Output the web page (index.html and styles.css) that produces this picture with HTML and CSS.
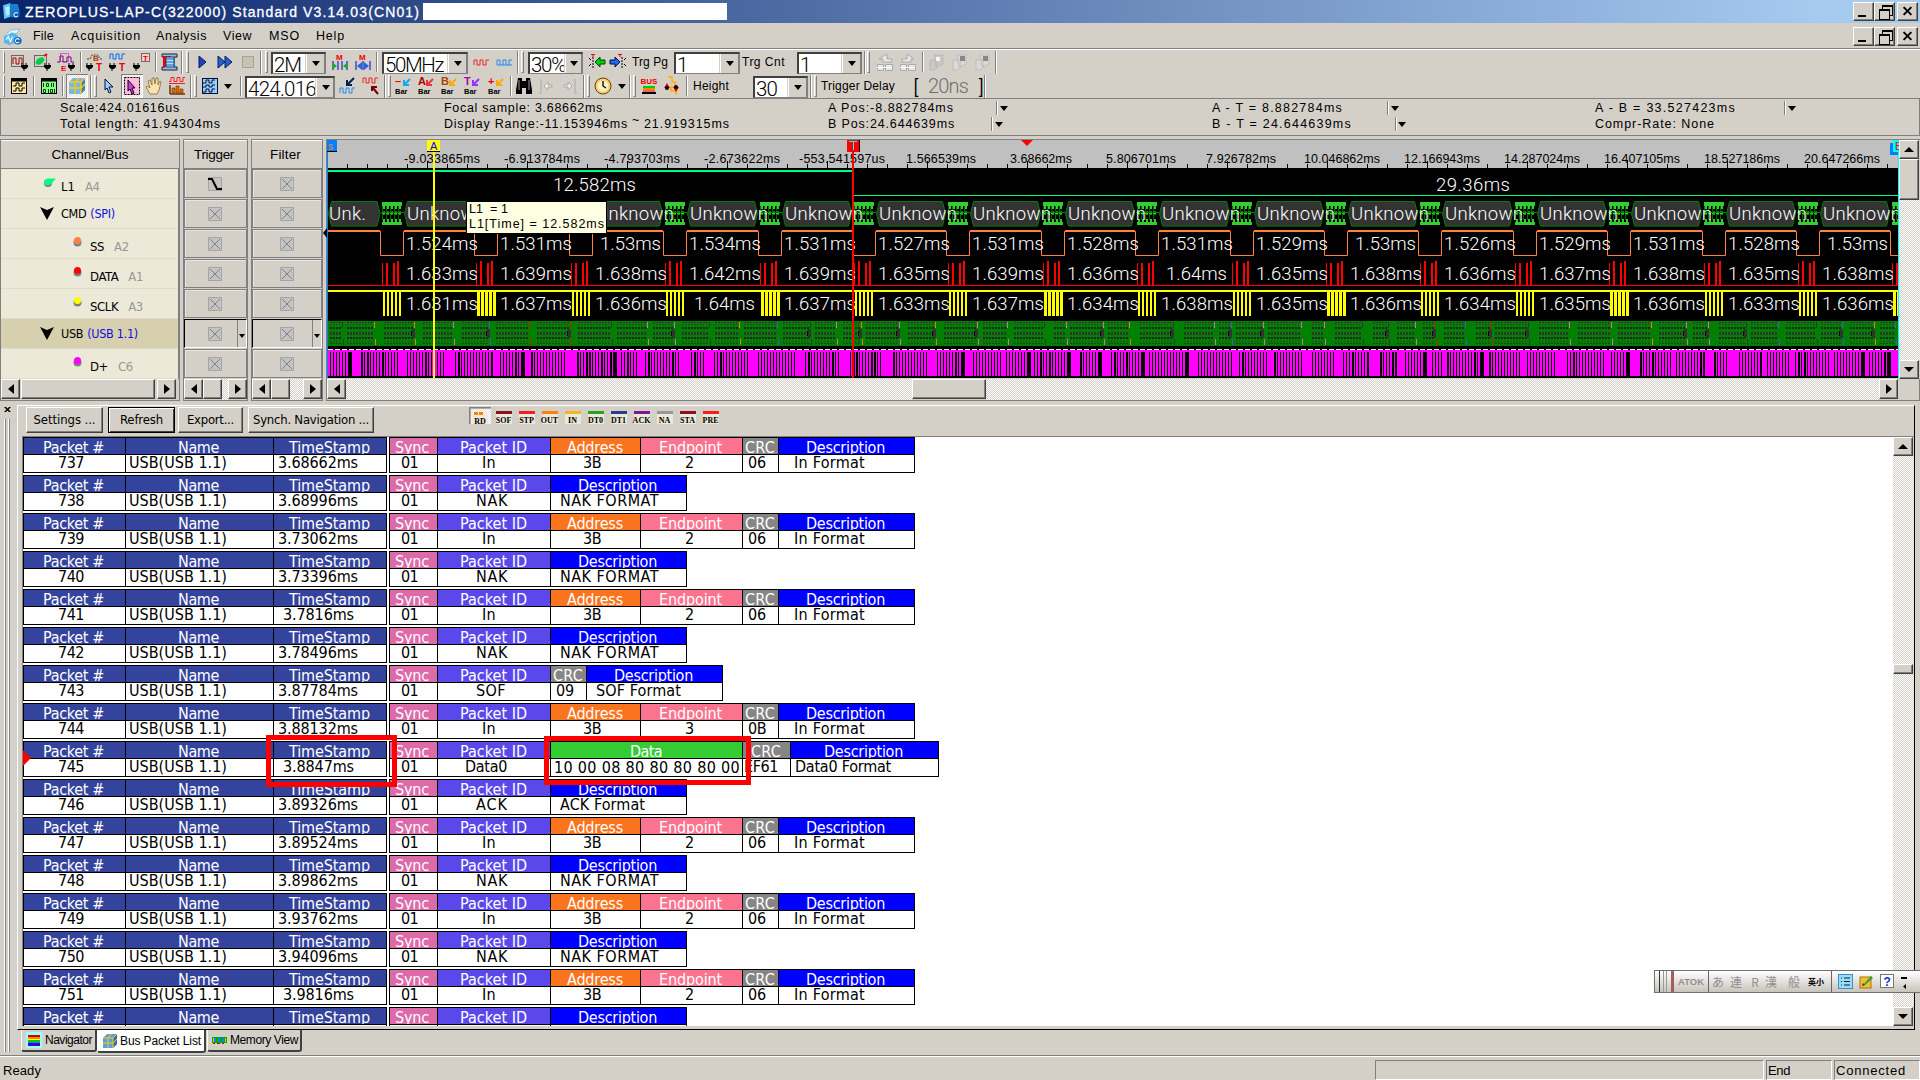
FILE: index.html
```html
<!DOCTYPE html>
<html lang="en">
<head>
<meta charset="utf-8">
<title>ZEROPLUS-LAP-C(322000) Standard V3.14.03(CN01)</title>
<link rel="stylesheet" href="styles.css">
</head>
<body>
<header class="title">
  <svg class="logo" viewBox="0 0 18 18"><path d="M1 3l7-2v13l-6 2z" fill="#5ac8f5"/><path d="M8 2h7l2 9-6 4-3-1z" fill="#1b7fd0"/><path d="M3 5l4-1v8l-3 1z" fill="#bfeaff"/><circle cx="13.5" cy="12" r="3.5" fill="#0a58b0"/><path d="M15 11a2 2 0 1 0 0 2" stroke="#fff" fill="none"/></svg>
  <span class="title-text" data-w="395">ZEROPLUS-LAP-C(322000) Standard V3.14.03(CN01)</span>
  <span class="blank"></span>
  <div class="winbtns"><b class="min"></b><b class="rest"></b><b class="cls"></b></div>
</header>
<nav class="menu">
  <svg class="logo" viewBox="0 0 18 18"><path d="M1 9l6-6 9-1-3 4z" fill="#e8f6ff" stroke="#58a8d8" stroke-width=".6"/><path d="M1 9l8-4 5 3v6l-8 3-5-2z" fill="#58b8ec"/><path d="M3 12l2-3 2 5 2-5" stroke="#fff" fill="none"/><circle cx="14" cy="13" r="3.6" fill="#0a68b8"/><path d="M15.500 12a2 2 0 1 0 0 2" stroke="#fff" fill="none"/></svg>
  <span class="m1" data-w="21">File</span><span class="m2" data-w="70">Acquisition</span><span class="m3" data-w="51">Analysis</span><span class="m4" data-w="29">View</span><span class="m5" data-w="31">MSO</span><span class="m6" data-w="29">Help</span>
  <div class="winbtns"><b class="min"></b><b class="rest"></b><b class="cls"></b></div>
</nav>
<div class="bar" id="bar1"></div>
<div class="bar" id="bar2"></div>
<section class="info">
  <div class="i1"><p><span data-w="120">Scale:424.01616us</span></p><p><span data-w="161">Total length: 41.94304ms</span></p></div>
  <div class="i2"><p><span data-w="159">Focal sample: 3.68662ms</span></p><p><span data-w="184">Display Range:-11.153946ms</span><span class="til">~</span><span data-w="86">21.919315ms</span></p></div>
  <div class="i3"><p><span data-w="126">A Pos:-8.882784ms</span><i class="dd d1"></i></p><p><span data-w="127">B Pos:24.644639ms</span><i class="dd d2"></i></p></div>
  <div class="i4"><p><span data-w="131">A - T = 8.882784ms</span><i class="dd d3"></i></p><p><span data-w="140">B - T = 24.644639ms</span><i class="dd d4"></i></p></div>
  <div class="i5"><p><span data-w="141">A - B = 33.527423ms</span><i class="dd d5"></i></p><p><span data-w="120">Compr-Rate: None</span></p></div>
</section>
<section class="scope">
  <div class="pane chan">
    <h2><span data-w="77">Channel/Bus</span></h2>
    <div class="rows">
      <div class="row l1"><svg width="14" height="9"><circle cx="5" cy="5" r="4" fill="#808080"/><path d="M1 4L4 0.500h9L7 7H2z" fill="#00ff80"/></svg><span>L1</span><em>A4</em></div>
      <div class="row bus"><svg width="14" height="13"><path d="M0 0l7 3 7-3-7 13z"/></svg><span>CMD</span><em class="pr">(SPI)</em></div>
      <div class="row sig"><svg width="9" height="10"><circle cx="4.500" cy="5.500" r="4" fill="#808080"/><circle cx="4.500" cy="3.500" r="3.500" fill="#ff8040"/></svg><span>SS</span><em>A2</em></div>
      <div class="row sig"><svg width="9" height="10"><circle cx="4.500" cy="5.500" r="4" fill="#808080"/><circle cx="4.500" cy="3.500" r="3.500" fill="#f00"/></svg><span>DATA</span><em>A1</em></div>
      <div class="row sig"><svg width="9" height="10"><circle cx="4.500" cy="5.500" r="4" fill="#808080"/><circle cx="4.500" cy="3.500" r="3.500" fill="#ff0"/></svg><span>SCLK</span><em>A3</em></div>
      <div class="row bus on"><svg width="14" height="13"><path d="M0 0l7 3 7-3-7 13z"/></svg><span>USB</span><em class="pr">(USB 1.1)</em></div>
      <div class="row sig"><svg width="9" height="10"><circle cx="4.500" cy="5.500" r="4" fill="#808080"/><circle cx="4.500" cy="3.500" r="3.500" fill="#f0f"/></svg><span>D+</span><em>C6</em></div>
    </div>
    <div class="hs"><b class="l"></b><b class="th grow"></b><b class="r"></b></div>
  </div>
  <div class="pane trig">
    <h2><span data-w="40">Trigger</span></h2>
    <div class="cells" data-kind="trigger"></div>
    <div class="hs"><b class="l"></b><b class="th"></b><u></u><b class="r"></b></div>
  </div>
  <div class="pane filt">
    <h2><span data-w="31">Filter</span></h2>
    <div class="cells" data-kind="filter"></div>
    <div class="hs"><b class="l"></b><b class="th"></b><u></u><b class="r"></b></div>
  </div>
  <div class="pane wave">
    <div class="wavebox">
      <svg id="wave" width="1572" height="238" viewBox="327 140 1572 238"></svg>
      <div class="vs"><b class="u"></b><b class="th"></b><u></u><b class="d"></b></div>
    </div>
    <div class="hs"><b class="l"></b><u class="a"></u><b class="th"></b><u></u><b class="r"></b><s></s></div>
    <div class="tip"><span data-w="39">L1&nbsp; = 1</span><br><span data-w="136">L1[Time] = 12.582ms</span></div>
    <i class="fold"></i>
  </div>
</section>
<section class="lower">
  <aside class="grip2"><svg width="7" height="5" viewBox="0 0 7 5"><path d="M0 0h2l1.500 1.500L5 0h2L4.500 2.500 7 5H5L3.500 3.500 2 5H0l2.500-2.500z"/></svg><div class="lines"></div></aside>
  <div class="main">
    <div class="panel">
      <div class="btns">
        <button class="b1"><span data-w="62">Settings ...</span></button><button class="b2"><span data-w="43">Refresh</span></button><button class="b3"><span data-w="47">Export...</span></button><button class="b4"><span data-w="116">Synch. Navigation ...</span></button>
        <div class="kinds" id="kinds"></div>
      </div>
      <div class="listbox">
        <div class="list" id="list">
          <i class="cur"></i><i class="mark k1"></i><i class="mark k2"></i>
        </div>
        <div class="vs"><b class="u"></b><u class="a"></u><b class="th"></b><u></u><b class="d"></b></div>
      </div>
    </div>
    <div class="tabs">
      <div class="tab t1"><svg width="16" height="16" viewBox="0 0 16 16"><path fill="#9ff" d="M0 0h16v16H0z"/><path fill="#c00" d="M2 3h12v2H2z"/><path fill="#f80" d="M2 5h12v2H2z"/><path fill="#ff0" d="M2 7h12v1H2z"/><path fill="#0c0" d="M2 8h12v2H2z"/><path fill="#08f" d="M2 10h12v1H2z"/><path fill="#40c" d="M2 11h12v3H2z"/></svg><span data-w="47">Navigator</span></div>
      <div class="tab t2 sel"><svg width="16" height="16" viewBox="0 0 16 16"><path fill="#58a0e0" d="M1 5l4-4h10v10l-4 4H1z"/><path fill="#2a70b8" d="M11 5l4-4v10l-4 4z"/><path d="M1 5h10v10M11 5l4-4M6 5v10M1 10h10l4-4M6 5l3-4" stroke="#fc0" fill="none"/></svg><span data-w="81">Bus Packet List</span></div>
      <div class="tab t3"><svg width="15" height="16" viewBox="0 0 15 16"><path fill="#0a0" d="M0 5h15v6H0z"/><path fill="#08f" d="M2 6h2v4H2zM6 6h2v4H6zM10 6h2v4h-2z"/><path fill="#dc0" d="M1 6h1v4H1zM13 6h1v4h-1z"/><path fill="#c00" d="M1 11h2v1H1zM5 11h3v1H5zM10 11h2v1h-2z"/></svg><span data-w="68">Memory View</span></div>
    </div>
  </div>
</section>
<footer class="status"><span class="ready" data-w="38">Ready</span><div class="f1"></div><div class="f2"><span data-w="22">End</span></div><div class="f3"><span data-w="70">Connected</span></div></footer>
<div class="ime">
  <i class="hd"></i><span class="at">ATOK</span><span class="j">あ</span><span class="j">連</span><span class="j">R</span><span class="j">漢</span><span class="j">般</span><span class="jb">英小</span><i class="sep"></i>
  <svg width="15" height="15" viewBox="0 0 15 15"><rect x=".5" y=".5" width="14" height="14" fill="#9adcf8" stroke="#3a90c8"/><path d="M3 4h1M6 4h6M3 7.500h1M6 7.500h6M3 11h1M6 11h6" stroke="#024" stroke-width="1.200"/></svg>
  <svg width="15" height="15" viewBox="0 0 15 15"><rect x="1" y="3" width="11" height="11" fill="#f0c030" stroke="#a87800"/><path d="M4 11l8-9 2 2-8 7z" fill="#3a9a3a"/><path d="M3 12l1-3 2 2z" fill="#333"/></svg>
  <svg width="14" height="15" viewBox="0 0 14 15"><rect x=".5" y=".5" width="13" height="13" fill="#fff" stroke="#777"/><text x="3.500" y="12" class="q">?</text></svg>
  <svg width="8" height="16" viewBox="0 0 8 16"><path d="M1 3h6v2H1zM6 10v5L3 12.500z"/></svg>
</div>
<script src="app.js"></script>
</body>
</html>
```
FILE: styles.css
```css
*{box-sizing:border-box}
body{margin:0;width:1920px;height:1080px;overflow:hidden;background:#d4d0c8;font:12px "Liberation Sans","Noto Sans CJK JP",sans-serif;color:#000;display:flex;flex-direction:column;position:relative}
span{white-space:pre;display:inline-block}
svg{display:block;flex:none}
h2,p{margin:0;font-weight:normal}
i,em,u,s{font-style:normal;text-decoration:none}
.logo{width:19px;height:19px;margin-left:2px}
.title{height:23px;flex:none;background:linear-gradient(90deg,#0a246a,#a6caf0 1820px);display:flex;align-items:center;color:#fff}
.title-text{font-size:14px;margin-left:4px;width:398px;-webkit-text-stroke:.3px #fff}
.blank{width:304px;height:17px;background:#fff}
.winbtns{margin-left:auto;display:flex;padding-right:2px}
.winbtns b{width:21px;height:19px;background:#d4d0c8;border:1px solid;border-color:#fff #404040 #404040 #fff;box-shadow:inset -1px -1px #808080;position:relative}
.winbtns .cls{margin-left:2px}
.min:after{content:"";position:absolute;left:4px;bottom:3px;width:8px;height:2px;background:#000}
.rest:before,.rest:after{content:"";position:absolute;width:9px;height:8px;border:1px solid #000;border-top-width:2px;background:#d4d0c8}
.rest:before{left:7px;top:2px}
.rest:after{left:4px;top:6px}
.cls:before,.cls:after{content:"";position:absolute;left:4px;top:7px;width:11px;height:2px;background:#000;transform:rotate(45deg)}
.cls:after{transform:rotate(-45deg)}
.menu{height:27px;flex:none;display:flex;align-items:center;border-bottom:1px solid #fff;box-shadow:inset 0 -1px #808080;font-size:12.500px}
.menu .logo{margin-left:3px}
.m1{margin-left:11px;width:38px}.m2{width:85px}.m3{width:67px}.m4{width:46px}.m5{width:47px}.m6{width:40px}
.bar{height:24px;flex:none;display:flex;align-items:center}
.bar>*{flex:none;display:flex;align-items:center;justify-content:center;height:24px}
.bar .sep{border-left:1px solid #808080;box-shadow:inset 1px 0 #fff;height:20px}
.bar .end{border-left:1px solid #808080;box-shadow:inset 1px 0 #fff;height:23px}
.bar .grip{height:22px;border:1px solid;border-color:#fff #808080 #808080 #fff}
.bar .lab{justify-content:flex-start}
.combo{background:#fff;border:1px solid #808080;border-top:2px solid #404040;border-left:2px solid #404040;height:22px!important;justify-content:flex-start!important;align-items:stretch!important;overflow:hidden;align-self:flex-end}
.combo span{font:300 20.500px/22px Roboto,"Liberation Sans",sans-serif;padding-left:1px;flex:1}
.combo b,.arrow{background:#d4d0c8;width:19px;display:flex;align-items:center;justify-content:center}
.combo b{border-left:1px solid #fff;box-shadow:-1px 0 #d4d0c8,inset -1px 0 #808080}
.combo b:after,.arrow:after{content:"";border:4px solid transparent;border-top:5px solid #000;border-bottom:0}
.press{background:repeating-conic-gradient(#fff 0 25%,#e4e0da 0 50%) 0 0/2px 2px;box-shadow:inset 1px 1px #808080,inset -1px -1px #fff}
.bracket{font-size:21px;color:#000;transform:scaleX(.8)}
.dim{font:300 20px Roboto,"Liberation Sans",sans-serif;color:#707070}
.tb text{font:bold 8px "Liberation Sans",sans-serif}
.info{height:38px;flex:none;border:1px solid #808080;display:flex;padding-top:1px;font-size:12.500px}
.info p{height:16px;display:flex;align-items:center}
.i1{width:443px;padding-left:59px}.i2{width:384px}.i3{width:384px}.i4{width:383px}
.til{width:12px;margin-left:4px;line-height:8px;align-self:flex-start}
.dd{width:14px;height:14px;border-left:1px solid #808080;box-shadow:inset 1px 0 #fff;display:flex;align-items:center;justify-content:center}
.dd:after{content:"";border:4px solid transparent;border-top:5px solid #000;border-bottom:0}
.d1{margin-left:42px}.d2{margin-left:36px}.d3{margin-left:44px}.d4{margin-left:43px}.d5{margin-left:48px}
.scope{height:265px;flex:none;display:flex;padding-top:3px;position:relative}
.pane{border:1px solid #808080;display:flex;flex-direction:column;height:262px;flex:none}
.pane h2{height:28px;display:flex;align-items:center;justify-content:center;border-top:1px solid #fff;font-size:13.500px;flex:none;padding:0 3px 1px 0}
.chan{width:180px}.trig{width:65px;margin-left:3px}.filt{width:72px;margin-left:3px}.wave{width:1594px;margin-left:3px;position:relative}
.chan h2{padding-right:0}
.rows{height:211px;border-top:1px solid #808080;background:#ece9d8;border-right:1px solid #808080;font:13px "DejaVu Sans Condensed","DejaVu Sans",sans-serif;flex:none}
.row{height:30px;display:flex;align-items:center;border-bottom:1px solid #e0dcc9}
.row em{color:#989898;margin-left:10px}
.row .pr{color:#11d;margin-left:4px}
.row.l1 svg{margin-left:42px;margin-right:4px}
.row.l1 span,.row.sig span,.row.l1 em,.row.sig em{position:relative;top:3px}
.row.bus svg{margin-left:39px;margin-right:7px}
.row.bus span,.row.bus em{font-size:12.500px;letter-spacing:-.3px}
.row.sig svg{margin-left:72px;margin-right:8px}
.row.sig span,.row.sig em,.row.l1 em{letter-spacing:-.4px}
.row.l1 svg,.row.sig svg{margin-bottom:3px}
.row.on{background:#d7d0ae}
.hs{height:21px;display:flex;flex:none;background:#d4d0c8}
.vs{width:21px;display:flex;flex-direction:column;background:#d4d0c8;flex:none}
.hs b,.vs b{background:#d4d0c8;border:1px solid;border-color:#fff #404040 #404040 #fff;box-shadow:inset -1px -1px #808080;display:flex;align-items:center;justify-content:center;flex:none}
.hs b{width:19px;height:20px}
.vs b{width:20px;height:19px}
.hs .grow{flex:1;margin:0 2px 0 1px}
.chan .hs{padding-right:3px}
.hs u,.vs u{flex:1;background:repeating-conic-gradient(#fff 0 25%,#d4d0c8 0 50%) 0 0/2px 2px}
.l:after,.r:after,.u:after,.d:after{content:"";border:5px solid transparent}
.l:after{border-right:6px solid #000;border-left:0}.r:after{border-left:6px solid #000;border-right:0}
.u:after{border-bottom:5px solid #000;border-top:0}.d:after{border-top:5px solid #000;border-bottom:0}
.cells{height:211px;border-top:1px solid #808080;flex:none}
.cell{height:29px;border:1px solid #808080;margin-bottom:1px;box-shadow:inset 1px 1px #e8e6e0;display:flex;align-items:center;justify-content:center;padding-right:2px}
.cell.f{padding-right:0}
.cell.on{border-color:#000 #fff #fff #000;box-shadow:none;justify-content:flex-end;padding-right:0}
.cell.on svg{margin-right:15px}
.cell.on.f svg{margin-right:18px}
.cell.on u{width:9px;align-self:stretch;border-left:1px solid #808080;display:flex;align-items:center;justify-content:center;padding-top:4px}
.cell.on u:after{content:"";border:3px solid transparent;border-top:4px solid #000;border-bottom:0}
.wavebox{display:flex;height:239px;flex:none}
.wavebox .th{height:41px}
.wave .hs .a{flex:none;width:566px}.wave .hs .th{width:74px}.wave .hs s{width:21px}
.wave text{white-space:pre}
.rl{font-size:12.500px}
.wt{font:300 18.500px Roboto,"Noto Sans",sans-serif;fill:#fff}
.tip{position:absolute;left:139px;top:61px;width:141px;height:33px;background:#ffffe1;border:1px solid #000;font-size:12.500px;line-height:15px;padding:0 2px}
.fold{position:absolute;left:-4px;top:88px;border:5px solid transparent;border-right:4px solid #000;border-left:0}
.lower{height:654px;flex:none;display:flex;padding-top:4px}
.grip2{width:17px;padding:2px 0 0 4px;flex:none}
.lines{margin:7px 0 0 0;width:6px;height:633px;border-left:1px solid #fff;border-right:1px solid #808080;box-shadow:inset 1px 0 #808080,inset -1px 0 #fff}
.main{width:1903px}
.panel{height:625px;width:1898px;border:1px solid;border-color:#fff #000 #000 #fff}
.btns{height:30px;display:flex;padding:1px 0 0 8px;align-items:flex-start}
.btns button{height:26px;padding:0 0 2px;border:1px solid;border-color:#fff #404040 #404040 #fff;box-shadow:inset -1px -1px #808080;background:#d4d0c8;font:13px "DejaVu Sans Condensed",sans-serif;color:#000;flex:none}
.b1{width:77px}.btns .b2{width:67px;margin-left:5px;border:1px solid #000;box-shadow:inset 1px 1px #fff,inset -1px -1px #404040}.b3{width:65px;margin-left:3px}.b4{width:126px;margin-left:5px}
.kinds{display:flex;margin-left:95px}
.kind{width:23px;height:17px;display:flex;flex-direction:column;align-items:center;padding-top:4px;overflow:hidden;font:bold 8px/13px "Liberation Serif",serif}
.kind svg{width:16px;height:3px}
.kind span{background:#ece9d8;width:16px;height:10px;display:flex;justify-content:center}
.kind:first-child{box-shadow:inset 1px 1px #808080,inset 2px 2px #b0aca4;width:22px;margin-right:1px;padding-top:5px}
.listbox{display:flex;margin-left:4px;height:590px;border-top:1px solid #808080;border-left:1px solid #808080}
.list{width:1870px;background:#fff;overflow:hidden;position:relative;flex:none}
.vs .a{flex:none;height:208px}
.listbox .vs .th{height:10px}
.pk{display:flex;height:36px;margin-bottom:2px;font:16px/18px "DejaVu Sans Condensed","DejaVu Sans",sans-serif}
.pk div{border:1px solid #000;border-right:0;flex:none}
.pk div.last{border-right:1px solid #000}
.pk div.gap{margin-right:2px}
.pk h3,.pk p{margin:0;font:inherit;height:16px;overflow:hidden}
.pk h3{color:#fff}
.pk h3 span{line-height:20px}
.pk p{height:18px;border-top:1px solid #000}
.pk p span{line-height:15px}
.pk .dt p span{line-height:18px}
.pk span{vertical-align:top}
.cur{position:absolute;left:0;top:313px;border:8px solid transparent;border-left-color:#f00;border-right:0;z-index:1}
.mark{position:absolute;border:5px solid #f00;z-index:2}
.k1{left:243px;top:298px;width:131px;height:52px}
.k2{left:521px;top:299px;width:207px;height:49px}
.tabs{display:flex;padding-left:4px}
.tab{height:22px;display:flex;align-items:center;background:#d4d0c8;border-right:2px solid #404040;border-bottom:2px solid #404040;border-left:1px solid #fff;border-radius:0 0 3px 3px;font-size:12px}
.tab svg{margin:0 3px 0 4px}
.t1{width:76px}.t2{width:109px;height:23px}.t3{width:95px;margin-left:1px}
.t2 svg{margin-right:2px}
.sel{background:#fff}
.status{height:24px;margin-top:1px;border-top:1px solid #fff;box-shadow:0 -1px #808080;display:flex;flex:none;font-size:13px;padding-top:3px}
.status>div{border:1px solid;border-color:#808080 #fff #fff #808080;height:20px;padding:2px 0 0 1px}
.ready{width:1372px;margin-left:3px;padding-top:3px}
.f1{width:389px}.f2{width:66px;margin-left:2px}.f3{width:86px;margin-left:2px}
.ime{position:absolute;left:1654px;top:970px;width:268px;height:23px;border:1px solid #707070;background:linear-gradient(#fff,#c8c4bc);display:flex;align-items:center;color:#909090;font-family:"Noto Sans CJK JP",sans-serif}
.hd{width:15px;height:21px;margin-left:4px;border-left:1px solid #333;border-right:3px solid #a06060;background:linear-gradient(90deg,transparent 3px,#999 3px 4px,transparent 4px 6px,#999 6px 7px,transparent 7px)}
.at{width:35px;padding-left:4px;font:bold 9.500px "Liberation Sans",sans-serif;border-right:1px solid #666;line-height:21px}
.j{font-size:12px;width:18px;text-align:center}
.j:nth-of-type(4){width:20px}.j:nth-of-type(5){width:11px}.j:nth-of-type(6){width:24px;text-align:right}
.jb{color:#000;font-size:8px;font-weight:bold;margin-left:8px;width:23px}
.ime .sep{height:21px;border-left:1px solid #666;width:7px}
.ime svg{margin-right:6px}
.q{font:bold 12px "Liberation Sans",sans-serif;fill:#13c}
```
FILE: app.js
```js
const $ = s => document.querySelector(s);
const pulse = (c, y = 3) => `<path d="M2 ${y + 5}v-5h3v5h3v-5h3v5h3v-5h3" stroke="${c}" fill="none"/>`;
const plug = x => `<path d="M${x} 11v3M${x + 4} 11v3M${x + 2} 15v4" stroke="#000"/><path d="M${x - 1} 13h7v2l-2 2h-3l-2-2z"/>`;

// Toolbar glyphs, 20 x 20
const icons = {
  a1: `<rect x="2.500" y="3.500" width="12" height="11" fill="none" stroke="#000" stroke-dasharray="1 1"/><path d="M4 12V6h3v6h3V6h3v6" stroke="#a00" fill="none"/>${plug(13)}`,
  a2: `<rect x="2.500" y="3.500" width="12" height="11" fill="none" stroke="#000" stroke-dasharray="1 1"/><ellipse cx="8" cy="9" rx="5" ry="3" transform="rotate(-35 8 9)" fill="#0c4"/><path d="M12 4l3-2" stroke="#f00" stroke-width="2"/>${plug(13)}`,
  a3: `<rect x="4.500" y="1.500" width="8" height="8" fill="none" stroke="#b0b" stroke-dasharray="1 1"/><path d="M1 10h3V4h3v6h4V5h4v5h3" stroke="#808" fill="none"/><text x="5" y="19" fill="#f00">E</text>${plug(13)}`,
  a4: `<path d="M2 7h3l2-4h6l2 4h3" stroke="#444" fill="none" stroke-dasharray="2 1"/><text x="8" y="9" fill="#a40">B</text>${plug(2)}<text x="11" y="19" fill="#e00" style="font-size:10px">T</text>`,
  a5: pulse('#06f', 2) + plug(2) + `<text x="11" y="19" fill="#e00" style="font-size:10px">T</text>`,
  a6: `<rect x="10.500" y="1.500" width="8" height="8" fill="#fcc" stroke="#000" stroke-dasharray="1 1"/><text x="12" y="9" fill="#e00">T</text>${plug(3)}`,
  a7: `<path d="M2 2h15v3h-3v10h3v3H2v-3h3V5H2z" fill="#9bd" stroke="#124"/><path d="M3 4h8v11H3z" fill="#e00"/><path d="M6 5h8v10H6z" fill="#bdf" stroke="#246"/><path d="M6 7h8M6 10h8M6 13h8" stroke="#06c"/>`,
  play: `<path d="M7 4l7 6-7 6z" fill="#2040c0" stroke="#012060"/>`,
  ff: `<path d="M3 4l7 6-7 6zM10 4l7 6-7 6z" fill="#2060d0" stroke="#012060"/>`,
  stop: `<rect x="4.500" y="4.500" width="11" height="11" fill="#c8c4b4" stroke="#a8a490"/>`,
  m1: `<text x="6" y="8" fill="#e00">M</text><path d="M3 9v9M17 9v9M8 9v9M12 9v9" stroke="#00c"/><path d="M3 11l4 3-4 3zM17 11l-4 3 4 3z" fill="#0b0"/>`,
  m2: `<text x="6" y="8" fill="#e00">M</text><path d="M3 9v9M17 9v9M10 9v9" stroke="#00c"/><path d="M4 14l5-4v8zM16 14l-5-4v8z" fill="#26d"/>`,
  r: pulse('#e22', 8), b: pulse('#28e', 8) + `<path d="M2 13h15" stroke="#28e" stroke-dasharray="3 3"/>`,
  tl: `<path d="M9 10l5-5v3h5v4h-5v3z" fill="#0c0" stroke="#040"/><path d="M7 5v12" stroke="#000" stroke-dasharray="2 1"/><path d="M3 6l2 2M3 14l2-2" stroke="#000"/><path d="M5 2.500h4M7 2v3" stroke="#e00"/>`,
  tr: `<path d="M11 10L6 5v3H1v4h5v3z" fill="#26f" stroke="#013"/><path d="M13 5v12" stroke="#000" stroke-dasharray="2 1"/><path d="M17 6l-2 2M17 14l-2-2" stroke="#000"/><path d="M9 2.500h4M11 2v3" stroke="#e00"/>`,
  g1: `<path d="M12 2L4 7h4v3h9V7h-5zM2.500 12.500h6v6h-6zM10.500 12.500h7v6h-7z" fill="#e8e8e8" stroke="#aaa"/><path d="M2 15.500h15" stroke="#fff"/>`,
  g2: `<path d="M9 2l7 5h-3v3H4V7h5zM2.500 12.500h6v6h-6zM10.500 12.500h7v6h-7z" fill="#e8e8e8" stroke="#aaa"/><path d="M2 15.500h15" stroke="#fff"/>`,
  g3: `<path d="M7 3h9v9l-4 2H9zM3 8h7v8l-3 2H3z" fill="#c8c8c8" stroke="#aaa" stroke-width=".5"/><path d="M9 5h4v4H9z" fill="#f4f4f4"/>`,
  g4: `<path d="M7 3h9v9l-4 2H9zM3 8h7v8l-3 2H3z" fill="#d8d8d8" stroke="#aaa" stroke-width=".5"/><path d="M10 4h5v5h-5z" fill="#888"/>`,
  w1: `<rect x="2.500" y="2.500" width="15" height="15" fill="#ffe9a0" stroke="#000"/><path d="M3 4h14" stroke="#000" stroke-width="3"/><path d="M4 10h3V7h3v3h3V7h3M4 15h3v-3h3v3h3v-3h3" stroke="#000" fill="none"/>`,
  w2: `<rect x="2.500" y="2.500" width="15" height="15" fill="#8f8" stroke="#000"/><path d="M3 4h14" stroke="#000" stroke-width="3"/><path d="M4.500 7v4M7.500 7.500h2v3h-2zM12.500 7v4M14.500 7v4M4.500 13.500h2v3h-2zM9.500 13v4M11.500 13.500h2v3h-2zM15.500 13v4" stroke="#040" fill="none"/>`,
  cube: `<path fill="#7ab8ec" d="M2 6l4-4h12v12l-4 4H2z"/><path fill="#3f80c0" d="M14 6l4-4v12l-4 4z"/><path d="M2 6h12v12M14 6l4-4M8 6v12M2 12h12l4-4M8 6l4-4" stroke="#fc0" fill="none" stroke-width="1.300"/>`,
  ptr: `<path d="M6 3l8 8H10l2 5-2 1-2-5-2 2z" fill="#9cf" stroke="#013"/>`,
  sel: `<rect x="2.500" y="1.500" width="15" height="17" fill="#fbd" stroke="#000" stroke-dasharray="2 1"/><path d="M6 4l7 8H10l2 5-2 1-2-5-2 2z" fill="#c4c" stroke="#102"/>`,
  hand: `<path d="M5 18L1 11l1-1 3 2-2-7 2-1 2 5V2h2l1 6 1-6h2v7l2-4 1 1-2 8-2 4z" fill="#fbe3b0" stroke="#863" stroke-width=".8"/>`,
  stat: `<path d="M2 5.500h2v-4h3v4h3v-4h3v4h3v-4h2M2 7.500h16" stroke="#e22" fill="none"/><path d="M3 9v9M3 18h15" stroke="#630" stroke-width="1.500"/><path d="M5 12h3v5H5zM9 10h3v7H9zM13 13h3v4h-3z" fill="#e60" stroke="#630" stroke-width=".6"/>`,
  wb: `<rect x="2.500" y="2.500" width="15" height="15" fill="#9cf" stroke="#013"/><path d="M3 7h3V4h3v3h3V4h3M3 11h3V9h3v2h3V9h3M3 16h3v-3h3v3h3v-3h3" stroke="#013" fill="none"/>`,
  z1: `<path d="M16 2l-6 6M9 4v5h5" stroke="#024" stroke-width="2" fill="none"/>` + pulse('#28e', 12),
  z2: pulse('#e22', 2) + `<path d="M17 18l-5-6M11 15v-4h5" stroke="#700" stroke-width="2" fill="none"/>`,
  bin: `<path d="M4 2h4v3h4V2h4l2 12v4h-6v-6H8v6H2v-4z"/><path d="M5 4v10M15 4v10" stroke="#999"/>`,
  d1: `<path d="M4 3v14h-2" stroke="#aaa" fill="none"/><path d="M7 10l4-4v3h4v2h-4v3z" fill="#eee" stroke="#aaa"/>`,
  d2: `<path d="M16 3v14h2" stroke="#aaa" fill="none"/><path d="M13 10L9 6v3H5v2h4v3z" fill="#eee" stroke="#aaa"/>`,
  clock: `<circle cx="10" cy="10" r="8" fill="#f5cf70" stroke="#664400"/><circle cx="10" cy="10" r="5.500" fill="#fdf0c0"/><path d="M10 5v5l3 2" stroke="#000" fill="none" stroke-width="1.300"/>`,
  bus: `<text x="1.500" y="8" fill="#e00" style="font-size:8px">BUS</text><path d="M4 11h12" stroke="#0c0" stroke-width="2"/><path d="M4 13h12" stroke="#f80" stroke-width="2"/><path d="M3 17h14" stroke="#000" stroke-width="2"/><path d="M4 15h12" stroke="#e00"/>`,
  hgt: `<path d="M6 1h4v5h3v5H9v4h5v4" stroke="#fa0" fill="none" stroke-width="1.500"/><path d="M2 12h6L5 7zM11 11h6l-3 5z" fill="#e00"/><circle cx="5" cy="12" r="2"/><circle cx="14" cy="11" r="2"/>`
};
const bar = (t, c, a) => `<text x="3" y="9" fill="${c}" style="font-size:11px">${t}</text><path d="M18 3l-5 5M12 4v5h5" stroke="${a}" stroke-width="2" fill="none"/><text x="3" y="18" style="font-size:7.500px">Bar</text>`;
Object.assign(icons, {
  x1: bar('–', '#e00', '#1ae'), x2: bar('A', '#a00', '#e33'), x3: bar('B', '#a40', '#fa0'), x4: bar('T', '#a0a', '#93f'), x5: bar('+', '#e00', '#fa0')
});

// [left edge, width, kind, value, text width]
const bars = {
  bar1: [[3, 2, 'grip'], [7, 23, 'ic', 'a1'], [30, 23, 'ic', 'a2'], [54, 23, 'ic', 'a3'], [80, 2, 'sep'], [83, 23, 'ic', 'a4'], [106, 23, 'ic', 'a5'], [129, 23, 'ic', 'a6'], [155, 2, 'sep'], [158, 23, 'ic', 'a7'], [181, 2, 'end'], [186, 3, 'grip'], [190, 23, 'ic', 'play'], [213, 23, 'ic', 'ff'], [236, 23, 'ic', 'stop'], [260, 2, 'end'], [265, 3, 'grip'], [271, 55, 'combo', '2M', 27], [329, 22, 'ic', 'm1'], [351, 23, 'ic', 'm2'], [376, 2, 'sep'], [382, 86, 'combo', '50MHz', 58], [470, 23, 'ic', 'r'], [493, 23, 'ic', 'b'], [517, 2, 'end'], [521, 3, 'grip'], [528, 55, 'combo', '30%', 34], [584, 23, 'ic', 'tl'], [607, 23, 'ic', 'tr'], [632, 38, 'lab', 'Trg Pg', 36], [674, 66, 'combo', '1', 0], [742, 45, 'lab', 'Trg Cnt', 43], [797, 65, 'combo', '1', 0], [864, 2, 'end'], [867, 3, 'grip'], [873, 23, 'ic', 'g1'], [896, 23, 'ic', 'g2'], [922, 2, 'sep'], [925, 23, 'ic', 'g3'], [948, 23, 'ic', 'g4'], [971, 23, 'ic', 'g4'], [995, 2, 'end']],
  bar2: [[3, 2, 'grip'], [7, 23, 'ic', 'w1'], [33, 2, 'sep'], [37, 23, 'ic', 'w2'], [62, 2, 'sep'], [66, 22, 'ic press', 'cube'], [90, 2, 'end'], [94, 3, 'grip'], [98, 22, 'ic', 'ptr'], [121, 22, 'ic press', 'sel'], [144, 22, 'ic', 'hand'], [166, 22, 'ic', 'stat'], [190, 2, 'end'], [194, 3, 'grip'], [199, 21, 'ic', 'wb'], [221, 14, 'arrow'], [240, 2, 'sep'], [245, 90, 'combo', '424.016', 68], [337, 22, 'ic', 'z1'], [360, 22, 'ic', 'z2'], [384, 2, 'end'], [388, 3, 'grip'], [391, 22, 'ic', 'x1'], [414, 22, 'ic', 'x2'], [437, 22, 'ic', 'x3'], [460, 22, 'ic', 'x4'], [484, 22, 'ic', 'x5'], [510, 2, 'sep'], [513, 22, 'ic', 'bin'], [536, 22, 'ic', 'd1'], [558, 22, 'ic', 'd2'], [583, 2, 'end'], [587, 3, 'grip'], [592, 22, 'ic', 'clock'], [615, 13, 'arrow'], [629, 2, 'end'], [633, 3, 'grip'], [638, 22, 'ic', 'bus'], [661, 22, 'ic', 'hgt'], [686, 2, 'sep'], [693, 40, 'lab', 'Height', 36], [753, 55, 'combo', '30', 21], [810, 2, 'end'], [814, 3, 'grip'], [821, 76, 'lab', 'Trigger Delay', 74], [913, 6, 'bracket', '['], [928, 40, 'dim', '20ns', 40], [978, 6, 'bracket', ']'], [984, 2, 'end']]
};
for (const id in bars) {
  let x = 0, h = '';
  for (const [l, w, k, v, tw] of bars[id]) {
    let inner = '';
    if (k.startsWith('ic')) inner = `<svg class="tb" width="20" height="20" viewBox="0 0 20 20">${icons[v]}</svg>`;
    else if (v) inner = `<span${tw ? ` data-w="${tw}"` : ''}>${v}</span>`;
    if (k === 'combo') inner += '<b></b>';
    h += `<div class="${k}" style="margin-left:${l - x}px;width:${w}px">${inner}</div>`;
    x = l + w;
  }
  $('#' + id).innerHTML = h;
}

// Trigger and filter columns
const none = '<svg width="14" height="14"><rect x=".5" y=".5" width="13" height="13" fill="#c4c4c4" stroke="#808080" stroke-dasharray="1 1"/><path d="M2 2l10 10M12 2L2 12" stroke="#808080"/></svg>';
const fall = '<svg width="14" height="14"><rect x=".5" y=".5" width="13" height="13" fill="#c4c4c4" stroke="#808080" stroke-dasharray="1 1"/><path d="M0 2h4l5 10h5" stroke="#000" stroke-width="2" fill="none"/></svg>';
document.querySelectorAll('.cells').forEach(c => {
  const t = c.dataset.kind === 'trigger';
  for (let i = 0; i < 7; i++) c.innerHTML += `<div class="cell${i === 5 ? ' on' : ''}${t ? '' : ' f'}">${i === 0 && t ? fall : none}${i === 5 ? '<u></u>' : ''}</div>`;
});

// Waveforms; coordinates are window pixels
let s = '<rect x="327" y="140" width="1572" height="28" fill="#c0c0c0"/><rect x="327" y="168" width="1572" height="210"/>';
const R = (x, y, w, h, f) => { s += `<rect x="${x}" y="${y}" width="${w}" height="${h}" fill="${f}"/>`; };
const T = (x, y, w, t, c) => { s += `<text class="${c}" x="${x}" y="${y}" textLength="${w}" lengthAdjust="spacing">${t}</text>`; };
for (let x = 327, i = 0; x < 1898; x += 20, i++) R(x, i % 5 ? 164 : 161, 1, i % 5 ? 4 : 7, '#000');
['-9.033865ms', '-6.913784ms', '-4.793703ms', '-2.673622ms', '-553.541597us', '1.566539ms', '3.68662ms', '5.806701ms', '7.926782ms', '10.046862ms', '12.166943ms', '14.287024ms', '16.407105ms', '18.527186ms', '20.647266ms'].forEach((t, i) => {
  const w = i === 4 ? 86 : t.length < 10 ? 62 : t.length < 11 ? 70 : 76;
  T((i > 4 && i < 9 ? 441 + 100 * i : 442 + 100 * i) - w / 2, 163, w, t, 'rl');
});
R(328, 170, 525, 2, '#00ff80'); R(854, 195, 1044, 1, '#00ff80');
T(553, 191, 83, '12.582ms', 'wt'); T(1436, 191, 74, '29.36ms', 'wt');
let seed = 7;
const rnd = () => (seed = (seed * 16807) % 2147483647) / 2147483647;
const lows = Array.from({ length: 17 }, (_, i) => Math.round(380 + 94.4 * i));
const ss = [524, 531, 53, 534, 531, 527, 531, 528, 531, 529, 53, 526, 529, 531, 528, 53];
const da = [633, 639, 638, 642, 639, 635, 639, 636, 64, 635, 638, 636, 637, 638, 635, 638];
const sc = [631, 637, 636, 64, 637, 633, 637, 634, 638, 635, 636, 634, 635, 636, 633, 636];
const hex = (a, b) => { s += `<path d="M${a} 213.500l3-12H${b - 3}l3 12-3 12.500H${a + 3}z" fill="#333" stroke="#008000"/>`; };
hex(328.5, 380);
T(329, 220, 37, 'Unk.', 'wt');
R(328, 285, 1570, 1, '#f00'); R(328, 290, 1570, 2, '#ff0');
s += '<path fill="none" stroke="#ff8040" d="M328 231.500' + lows.map(x => `H${x + .5}V255.500H${x + 23.5}V231.500`).join('') + '"/>';
R(328, 230, 52, 1, '#ff8040');
lows.forEach((x, i) => {
  if (i < 16) { hex(x + 24.5, lows[i + 1] - .5); R(x + 24, 230, lows[i + 1] - x - 24, 1, '#ff8040'); }
  R(x + 1, 212, 23, 1, '#008000');
  for (let k = 0; k < 5; k++) {
    const a = x + 2 + k * 4;
    R(a, 202, 4, 4, '#3c3'); R(a + 1, 206, 2, 3, '#3c3'); R(a, 222, 4, 3, '#3c3'); R(a + 1, 219, 2, 3, '#3c3');
    R(a, 206, 1, 14, '#060'); R(a + 1, 211, 2, 4, '#080'); R(a, 213, 3, 1, '#3c3');
  }
  [[2, 1, 0], [6, 2, i % 2], [13, 2, 0], [17, 2, 1]].forEach(([o, w, h]) => R(x + o, h ? 261 : 263, w, h ? 24 : 22, '#f00'));
  for (let k = 0; k < 5; k++) R(x + 3 + k * 4, 292, i % 3 === 1 ? 3 : 2, 24, '#ff0');
});
lows.slice(0, 16).forEach((x, i) => {
  T(x + 27, 220, 78, 'Unknown', 'wt');
  [[ss[i], 250], [da[i], 280], [sc[i], 310]].forEach(([v, y]) => v < 100 ? T(x + 31, y, 61, `1.${v}ms`, 'wt') : T(x + 26, y, 72, `1.${v}ms`, 'wt'));
});
// USB bus row
R(328, 321, 1570, 25, '#008000');
for (let x = 330; x < 1896;) {
  const n = 4 + Math.floor(rnd() * 8);
  for (let k = 0; k < n && x < 1895; k++, x += 3) {
    R(x, 322, 2, 1, '#333'); R(x, 343, 2, 1, '#333'); R(x, 324, 1, 1, '#333'); R(x, 341, 1, 1, '#333');
    R(x, 327, 2, 2, '#222'); R(x, 332, 2, 3, '#333'); R(x, 337, 2, 2, '#222');
  }
  const c = ['#5b48ea', '#dd6baa', '#dd6baa', '#fa7420', '#e00', '#333'][Math.floor(rnd() * 6)];
  R(x, 322, 1, 6, c); R(x + 1, 339, 1, 6, c);
  if (rnd() > .5) { R(x - 2, 329, 3, 9, '#333'); R(x - 3, 331, 1, 5, '#000'); }
  x += 4 + Math.floor(rnd() * 8);
}
// D+ row
R(328, 350, 1570, 26, '#f0f');
s += '<path d="M328 349.500H1898" stroke="#fff" stroke-dasharray="5 2"/>';
for (let x = 330; x < 1897;) {
  const n = 4 + Math.floor(rnd() * 10);
  for (let k = 0; k < n && x < 1896; k++, x += 3) R(x, 352, rnd() > .85 ? 2 : 1, 24, '#000');
  if (rnd() > .75) { R(x, 352, 4, 24, '#000'); x += 4; }
  x += 3 + Math.floor(rnd() * 8);
}
// Markers
R(327, 140, 10, 12, '#0080ff'); R(327, 151, 10, 1, '#000'); R(327, 152, 1, 226, '#0080ff'); s += '<text x="328" y="150" style="font-size:10px" fill="#ff8040">s</text>';
R(433, 150, 2, 228, '#ff0'); R(427, 140, 13, 12, '#ff0'); R(427, 151, 13, 1, '#000'); s += '<text x="430" y="150" style="font-size:11px" fill="#00f">A</text>';
R(852, 150, 2, 228, '#f00'); R(847, 140, 12, 12, '#f00'); R(859, 140, 1, 12, '#000'); s += '<path d="M849 141.500h8M853.500 141v9" stroke="#0ff"/>';
s += '<path d="M1021 140h12l-6 6z" fill="#f00"/>';
R(1890, 143, 9, 12, '#0080ff'); R(1893, 140, 6, 12, '#0ff'); s += '<text x="1895" y="150" style="font-size:11px" fill="#f00">B</text>'; R(1898, 152, 1, 226, '#0ff');
$('#wave').innerHTML = s;

// Packet kind filter buttons
$('#kinds').innerHTML = [['RD', '#ff8000'], ['SOF', '#881020'], ['STP', '#f02020'], ['OUT', '#ff8000'], ['IN', '#f0b820'], ['DT0', '#30a020'], ['DT1', '#2b3b9b'], ['ACK', '#801890'], ['NA', '#989898'], ['STA', '#881020'], ['PRE', '#f02020']]
  .map(([t, c], i) => `<div class="kind${i ? '' : ' press'}"><svg viewBox="0 0 16 3"><path d="${i ? 'M0 0h16v3H0z' : 'M2 0h4v3H2zM7 0h4v3H7z'}" fill="${c}"/></svg><span>${t}</span></div>`).join('');

// Packets
const col = { blue: '#34439b', sync: '#dd6baa', pid: '#5b48ea', addr: '#fa7420', ep: '#fb748f', crc: '#858585', desc: '#0000ff', data: '#33cc33' };
// [header, colour, cell width, header text width, header text left, value, value width, value left]
const cell = ([h, c, w, hw, hx, v, vw, vx, cls = '']) => `<div class="${cls}" style="width:${w}px"><h3 style="background:${col[c]};padding-left:${hx - 1}px"><span data-w="${hw}">${h}</span></h3><p style="padding-left:${vx - 1}px"><span data-w="${vw}">${v}</span></p></div>`;
const packets = [
  [737, '3.68662', 'in', 2, '06'], [738, '3.68996', 'nak'], [739, '3.73062', 'in', 2, '06'], [740, '3.73396', 'nak'], [741, '3.7816', 'in', 2, '06'], [742, '3.78496', 'nak'], [743, '3.87784', 'sof'], [744, '3.88132', 'in', 3, '0B'], [745, '3.8847', 'data'], [746, '3.89326', 'ack'], [747, '3.89524', 'in', 2, '06'], [748, '3.89862', 'nak'], [749, '3.93762', 'in', 2, '06'], [750, '3.94096', 'nak'], [751, '3.9816', 'in', 2, '06'], [752, '3.98496', 'nak']
];
const kinds = {
  in: ['In', 14, 45], nak: ['NAK', 32, 39], sof: ['SOF', 30, 39], data: ['Data0', 42, 28], ack: ['ACK', 32, 39]
};
$('#list').insertAdjacentHTML('beforeend', packets.map(([n, t, k, ep, crc]) => {
  const short = t.length < 7, [pn, pw, px] = kinds[k];
  const c = [
    ['Packet #', 'blue', 102, 61, 20, n, 26, 35],
    ['Name', 'blue', 148, 41, 53, 'USB(USB 1.1)', 98, 4],
    ['TimeStamp', 'blue', 114, 81, 16, t + 'ms', short ? 71 : 80, short ? 10 : 5, 'gap last'],
    ['Sync', 'sync', 48, 34, 6, '01', 17, 12],
    ['Packet ID', 'pid', 113, 67, 23, pn, pw, px]
  ];
  if (k === 'in') c.push(['Address', 'addr', 90, 56, 17, '3B', 18, 33], ['Endpoint', 'ep', 102, 63, 19, ep, 10, 45], ['CRC', 'crc', 36, 30, 3, crc, 18, 6], ['Description', 'desc', 137, 79, 28, 'In Format', 71, 16, 'last']);
  if (k === 'nak') c.push(['Description', 'desc', 137, 79, 28, 'NAK FORMAT', 99, 10, 'last']);
  if (k === 'ack') c.push(['Description', 'desc', 137, 79, 28, 'ACK Format', 85, 10, 'last']);
  if (k === 'sof') c.push(['CRC', 'crc', 36, 30, 3, '09', 18, 6], ['Description', 'desc', 137, 79, 28, 'SOF Format', 85, 10, 'last']);
  if (k === 'data') c.push(['Data', 'data', 192, 32, 80, '10 00 08 80 80 80 80 00', 186, 4, 'dt'], ['CRC', 'crc', 48, 30, 9, 'EF61', 34, 2], ['Description', 'desc', 149, 79, 34, 'Data0 Format', 96, 5, 'last']);
  return `<section class="pk">${c.map(cell).join('')}</section>`;
}).join(''));

// Spread letters so that each label takes its set width
document.querySelectorAll('[data-w]').forEach(e => {
  const r = document.createRange();
  r.selectNodeContents(e);
  const w = r.getBoundingClientRect().width;
  e.style.letterSpacing = ((e.dataset.w - w) / e.textContent.length).toFixed(3) + 'px';
});
```
